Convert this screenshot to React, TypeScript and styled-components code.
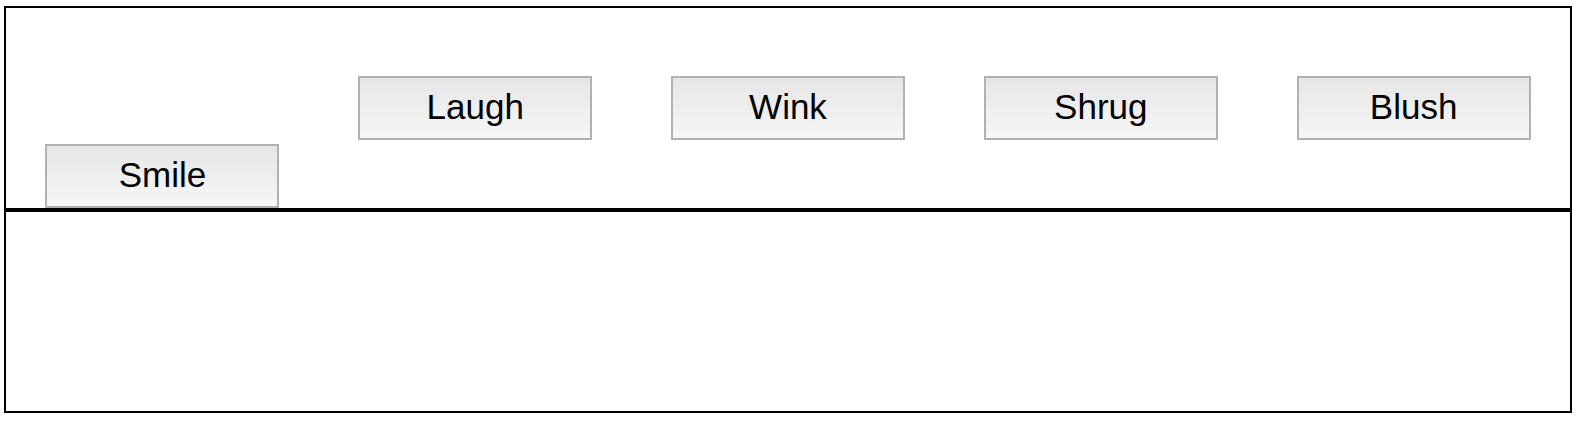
import React from "react";
import styled, { createGlobalStyle } from "styled-components";

const GlobalStyle = createGlobalStyle`
  html, body {
    margin: 0;
    padding: 0;
    background: #ffffff;
  }
  body {
    font-family: "Liberation Sans", Arial, Helvetica, sans-serif;
  }
`;

const Frame = styled.div`
  box-sizing: border-box;
  margin: 6px 0 0 4px;
  width: 1568px;
  height: 407px;
  border: 2px solid #000;
  display: flex;
  flex-direction: column;
`;

const Toolbar = styled.div`
  box-sizing: content-box;
  height: 200px;
  border-bottom: 4px solid #000;
  display: flex;
  justify-content: space-around;
  align-items: center;
`;

const Stage = styled.div`
  flex: 1;
`;

const EmoteButton = styled.button<{ $low?: boolean }>`
  box-sizing: border-box;
  width: 234px;
  height: 64px;
  padding: 0 0 3px;
  border: 2px solid #b1b1b1;
  border-radius: 0;
  background: linear-gradient(#e6e6e6, #f6f6f6);
  color: #000;
  font-family: "Liberation Sans", Arial, Helvetica, sans-serif;
  font-size: 35px;
  line-height: 1;
  cursor: pointer;
  align-self: ${(p) => (p.$low ? "flex-end" : "center")};
`;

const emotes = ["Smile", "Laugh", "Wink", "Shrug", "Blush"];

export default function App() {
  return (
    <>
      <GlobalStyle />
      <Frame>
        <Toolbar>
          {emotes.map((e, i) => (
            <EmoteButton key={e} $low={i === 0}>
              {e}
            </EmoteButton>
          ))}
        </Toolbar>
        <Stage />
      </Frame>
    </>
  );
}
